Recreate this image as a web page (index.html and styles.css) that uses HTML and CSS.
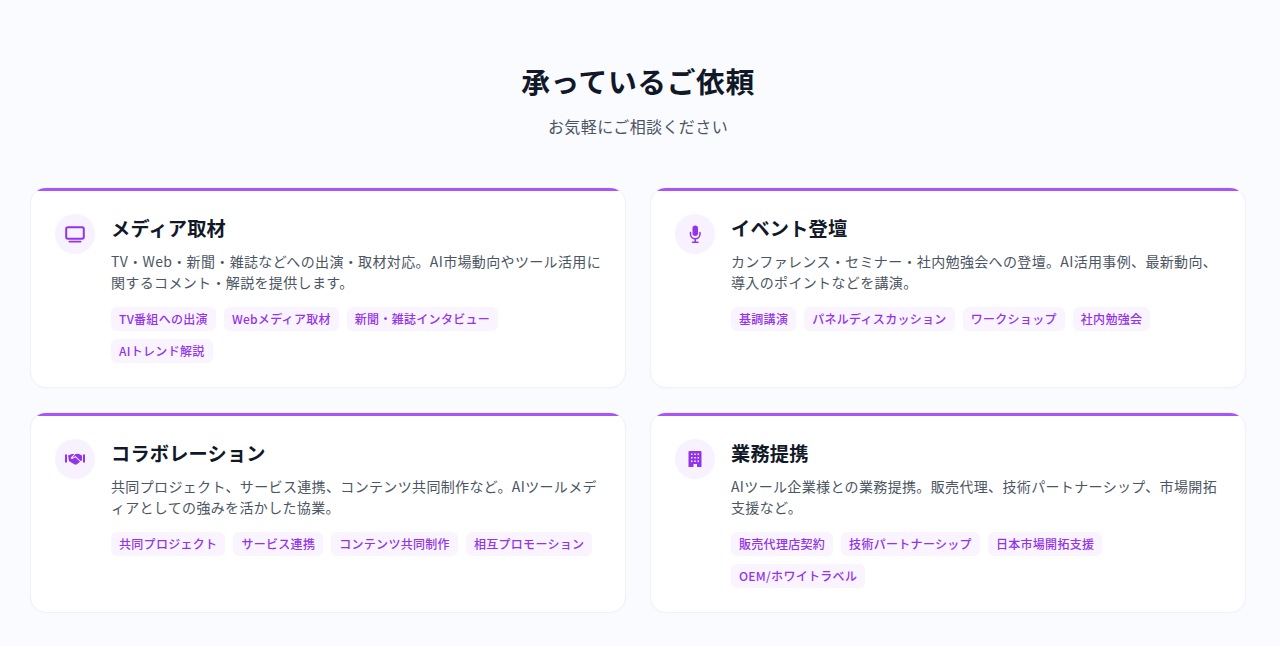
FILE: index.html
```html
<!DOCTYPE html>
<html lang="ja">
<head>
<meta charset="utf-8">
<title>承っているご依頼</title>
<link rel="stylesheet" href="styles.css">
</head>
<body>
<section class="section">
  <h2 class="title">承っているご依頼</h2>
  <p class="subtitle">お気軽にご相談ください</p>
  <div class="grid">
    <article class="card">
      <div class="icon"><svg viewBox="0 0 24 24"><rect x="3.200" y="5.200" width="17.600" height="11.600" rx="1.800" fill="none" stroke="currentColor" stroke-width="2"/><rect x="5.500" y="18.800" width="13" height="1.600" rx=".8"/></svg></div>
      <div class="body">
        <h3>メディア取材</h3>
        <p>TV・Web・新聞・雑誌などへの出演・取材対応。AI市場動向やツール活用に関するコメント・解説を提供します。</p>
        <ul class="tags"><li>TV番組への出演</li><li>Webメディア取材</li><li>新聞・雑誌インタビュー</li><li>AIトレンド解説</li></ul>
      </div>
    </article>
    <article class="card">
      <div class="icon"><svg viewBox="0 0 24 24"><rect x="9.500" y="3.500" width="5.500" height="10.500" rx="2.750"/><path d="M7.500 10.500v1.500a4.700 4.700 0 0 0 9.500 0v-1.500M12.250 17v3M9.500 20.300h5.500" fill="none" stroke="currentColor" stroke-width="1.500" stroke-linecap="round"/></svg></div>
      <div class="body">
        <h3>イベント登壇</h3>
        <p>カンファレンス・セミナー・社内勉強会への登壇。AI活用事例、最新動向、導入のポイントなどを講演。</p>
        <ul class="tags"><li>基調講演</li><li>パネルディスカッション</li><li>ワークショップ</li><li>社内勉強会</li></ul>
      </div>
    </article>
    <article class="card">
      <div class="icon"><svg viewBox="0 0 24 24"><path d="M2 7.500h2v8H2zM20 7.500h2v8h-2z"/><path d="M5 8.500l4-1.500h2.500L8 10.200c-.7.9.5 2.200 1.700 1.600l2.600-1.600 4.700 4.300-1 1.300-1 .4-1 1-2 .5-1.500-1-3-1.700-1.500-1z"/><path d="M12.500 7l3-.2 3.500 1.700v5l-1.300.5-5.200-5-2 1.300-1 .1z"/></svg></div>
      <div class="body">
        <h3>コラボレーション</h3>
        <p>共同プロジェクト、サービス連携、コンテンツ共同制作など。AIツールメディアとしての強みを活かした協業。</p>
        <ul class="tags"><li>共同プロジェクト</li><li>サービス連携</li><li>コンテンツ共同制作</li><li>相互プロモーション</li></ul>
      </div>
    </article>
    <article class="card">
      <div class="icon"><svg viewBox="0 0 24 24"><path fill-rule="evenodd" d="M6.500 4h11a1 1 0 0 1 1 1v15h-4.500v-3h-3.500v3H5.500V5a1 1 0 0 1 1-1zM8 6.500V8h1.500V6.500zm3.300 0V8h1.500V6.500zm3.200 0V8H16V6.500zM8 10v1.500h1.500V10zm3.300 0v1.500h1.500V10zm3.200 0v1.500H16V10zM8 13.500V15h1.500v-1.500zm3.300 0V15h1.500v-1.500zm3.200 0V15H16v-1.500z"/></svg></div>
      <div class="body">
        <h3>業務提携</h3>
        <p>AIツール企業様との業務提携。販売代理、技術パートナーシップ、市場開拓支援など。</p>
        <ul class="tags"><li>販売代理店契約</li><li>技術パートナーシップ</li><li>日本市場開拓支援</li><li>OEM/ホワイトラベル</li></ul>
      </div>
    </article>
  </div>
</section>
</body>
</html>
```
FILE: styles.css
```css
* { box-sizing: border-box; }
html, body { margin: 0; }
body {
  background: #fafbff;
  color: #111827;
  font-family: "Noto Sans CJK JP", "Noto Sans", sans-serif;
  padding-right: 4px;
}
.section { max-width: 1216px; margin: 0 auto; padding-top: 60px; }
.title {
  margin: 0;
  text-align: center;
  font-size: 28.8px;
  line-height: 42px;
  font-weight: 700;
  letter-spacing: .02em;
}
.subtitle {
  margin: 12px 0 0;
  text-align: center;
  font-size: 16px;
  line-height: 24px;
  color: #4b5563;
  letter-spacing: .025em;
}
.grid {
  margin-top: 49px;
  display: grid;
  grid-template-columns: 1fr 1fr;
  gap: 24px;
}
.card {
  position: relative;
  overflow: hidden;
  height: 201px;
  display: flex;
  gap: 16px;
  padding: 26px 24px 24px;
  background: #fff;
  border: 1px solid #f1f1f6;
  border-radius: 16px;
  box-shadow: 0 1px 3px rgba(0,0,0,.02);
}
.card::before {
  content: "";
  position: absolute;
  top: -1px;
  left: -1px;
  right: -1px;
  height: 4px;
  background: #a855f7;
}
.icon {
  flex: none;
  width: 40px;
  height: 40px;
  border-radius: 50%;
  background: #f8f1ff;
  color: #9333ea;
  display: flex;
  align-items: center;
  justify-content: center;
}
.icon svg { fill: currentColor; width: 24px; height: 24px; }
.body { min-width: 0; flex: 1; }
h3 { margin: 0; font-size: 19.200px; line-height: 29px; font-weight: 700; letter-spacing: .01em; }
.body p { margin: 8px 0 0; font-size: 14px; line-height: 21px; color: #4b5563; letter-spacing: .025em; }
.tags { list-style: none; margin: 14px 0 0; padding: 0; display: flex; flex-wrap: wrap; gap: 8px; }
.tags li {
  padding: 4px 8px;
  background: #f9f4ff;
  color: #9333ea;
  font-size: 12px;
  line-height: 16px;
  font-weight: 500;
  letter-spacing: .025em;
  border-radius: 6px;
}
```
